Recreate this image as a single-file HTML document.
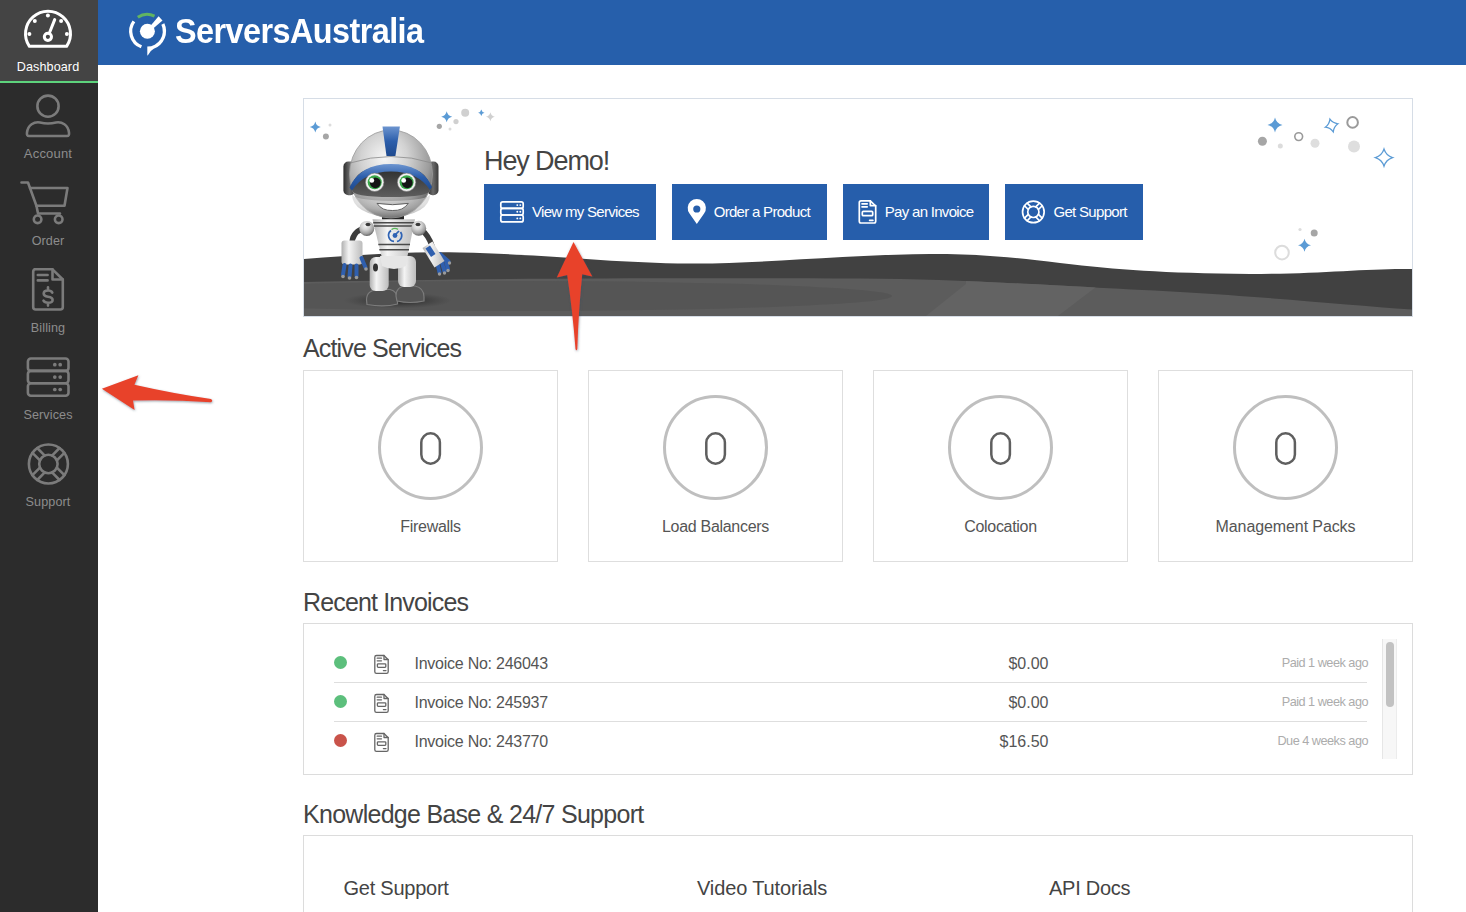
<!DOCTYPE html>
<html><head><meta charset="utf-8">
<style>
*{margin:0;padding:0;box-sizing:border-box}
html,body{width:1466px;height:912px;overflow:hidden;background:#fff;font-family:"Liberation Sans",sans-serif}
.abs{position:absolute}
.t{position:absolute;line-height:1;white-space:nowrap}
#sb{position:absolute;left:0;top:0;width:98px;height:912px;background:#2c2c2c}
#sbact{position:absolute;left:0;top:0;width:98px;height:81px;background:#444}
#sbline{position:absolute;left:0;top:81px;width:98px;height:2px;background:#5dd37c}
.sbl{position:absolute;left:-1px;width:98px;text-align:center;font-size:12.6px;line-height:1;color:#8c8c8c;letter-spacing:0.1px}
#hdr{position:absolute;left:98px;top:0;width:1368px;height:65px;background:#265fab}
.box{position:absolute;border:1px solid #dcdcdc;background:#fff}
.h2{position:absolute;font-size:25px;line-height:1;color:#444;letter-spacing:-0.85px;white-space:nowrap}
.btn{position:absolute;top:184px;height:56px;background:#265eab}
.btxt{position:absolute;font-size:15px;line-height:1;color:#fff;white-space:nowrap;letter-spacing:-0.7px}
.card{position:absolute;top:370px;width:255px;height:192px;border:1px solid #dedede}
.ring{position:absolute;left:74px;top:24px;width:105px;height:105px;border:3px solid #bfbfbf;border-radius:50%}
.num{position:absolute;left:0;width:253px;text-align:center;top:58px;font-size:45px;line-height:1;color:#555}
.clab{position:absolute;left:0;width:253px;text-align:center;top:148px;font-size:16px;line-height:1;color:#555;letter-spacing:-0.3px}
.inv{position:absolute;font-size:16px;line-height:1;color:#555;white-space:nowrap;letter-spacing:-0.25px}
.amt{position:absolute;font-size:16px;line-height:1;color:#555;white-space:nowrap;text-align:right;width:120px}
.st{position:absolute;font-size:12.7px;line-height:1;color:#acacac;white-space:nowrap;text-align:right;width:120px;letter-spacing:-0.5px}
.dot{position:absolute;width:13px;height:13px;border-radius:50%}
.sep{position:absolute;left:334px;width:1033px;height:1px;background:#dedede}
.kb{position:absolute;font-size:20px;line-height:1;color:#444;white-space:nowrap;letter-spacing:-0.25px}
</style></head><body>

<!-- SIDEBAR -->
<div id="sb">
  <div id="sbact"></div>
  <div id="sbline"></div>
  <div class="sbl" style="top:60.6px;color:#fff">Dashboard</div>
  <div class="sbl" style="top:147.2px;font-size:13px;letter-spacing:0.2px">Account</div>
  <div class="sbl" style="top:234.5px">Order</div>
  <div class="sbl" style="top:321.8px">Billing</div>
  <div class="sbl" style="top:409.1px">Services</div>
  <div class="sbl" style="top:496.4px">Support</div>
  <svg class="abs" style="left:0;top:0" width="98" height="520" viewBox="0 0 98 520">
    <g fill="none" stroke="#fff" stroke-width="3" stroke-linecap="round" stroke-linejoin="round">
      <path d="M29.4 46.3 A22.5 22.5 0 1 1 66.6 46.3 Z"/>
      <circle cx="47.9" cy="36.8" r="3.6"/>
      <path d="M49.8 32 L54.7 19.6"/>
    </g>
    <g fill="#fff">
      <circle cx="47.9" cy="15.4" r="2"/><circle cx="34.8" cy="20.9" r="2"/><circle cx="61.1" cy="20.9" r="2"/>
      <circle cx="29.4" cy="34" r="2"/><circle cx="66.9" cy="34" r="2"/>
    </g>
    <g fill="none" stroke="#7b7b7b" stroke-width="2.6" stroke-linecap="round" stroke-linejoin="round">
      <circle cx="48" cy="106.2" r="10.6"/>
      <path d="M29 136 L67 136 Q69.5 136 69 132.5 C68 125 62 121.5 56 122.5 Q48 124.5 40 122.5 C34 121.5 28 125 27 132.5 Q26.5 136 29 136 Z"/>
      <path d="M21.5 182.5 L28 182.5 L36.5 206 L38 213.5 L60 213.5"/>
      <path d="M30 188 L67.5 188 L64.5 205.8 L36.3 205.8"/>
      <circle cx="37.6" cy="219.3" r="3.8"/>
      <circle cx="58.7" cy="219.3" r="3.8"/>
      <path d="M34.5 269.3 L52.5 269.3 L62.8 279.5 L62.8 307 Q62.8 309.5 60.3 309.5 L35.7 309.5 Q33.2 309.5 33.2 307 L33.2 271.8 Q33.2 269.3 35.7 269.3 Z"/>
      <path d="M52.5 269.3 L52.5 279.5 L62.8 279.5"/>
      <path d="M37.8 275 L47.6 275 M37.8 280.4 L47.6 280.4"/>
      <path d="M52.3 292.6 Q51.3 290.5 48 290.5 Q43.7 290.5 43.7 293.6 Q43.7 296.2 48 296.7 Q52.6 297.2 52.6 299.9 Q52.6 302.7 48 302.7 Q44.6 302.7 43.5 300.6 M48 287.3 L48 290.5 M48 302.7 L48 305.6"/>
      <rect x="27.9" y="358.5" width="40.6" height="12.4" rx="3"/>
      <rect x="27.9" y="370.9" width="40.6" height="12.4" rx="3"/>
      <rect x="27.9" y="383.3" width="40.6" height="12.4" rx="3"/>
      <circle cx="48.4" cy="464" r="19.5"/>
      <circle cx="48.4" cy="464" r="9.2"/>
      <path d="M56.85 467.64 L64.38 475.17 M52.04 472.45 L59.57 479.98 M44.76 472.45 L37.23 479.98 M39.95 467.64 L32.42 475.17 M39.95 460.36 L32.42 452.83 M44.76 455.55 L37.23 448.02 M52.04 455.55 L59.57 448.02 M56.85 460.36 L64.38 452.83"/>
    </g>
    <g fill="#7b7b7b">
      <circle cx="54.8" cy="364.7" r="1.85"/><circle cx="60.2" cy="364.7" r="1.85"/>
      <circle cx="54.8" cy="377.1" r="1.85"/><circle cx="60.2" cy="377.1" r="1.85"/>
      <circle cx="54.8" cy="389.5" r="1.85"/><circle cx="60.2" cy="389.5" r="1.85"/>
    </g>
  </svg>
</div>

<!-- HEADER -->
<div id="hdr"></div>
<svg class="abs" style="left:120px;top:5px" width="60" height="56" viewBox="120 5 60 56">
  <g fill="none" stroke-width="3.3">
    <path d="M133.9 21.4 A16.7 16.7 0 0 0 141.4 46.8" stroke="#fff"/>
    <path d="M137.8 17.3 A16.7 16.7 0 0 1 154.5 16.1" stroke="#62b462" stroke-width="3"/>
  </g>
  <path d="M164.35 23.3 A18.7 18.7 0 0 1 153.8 48.77 Q149.8 50.8 147.9 55.3 Q147.3 55.8 147.3 55 L147.3 46.6 A15.4 15.4 0 0 0 161.36 24.69 Z" fill="#fff"/>
  <circle cx="147.4" cy="31.2" r="7.5" fill="#fff"/>
  <path d="M149.5 27 L158.6 16.2 L162.5 20.6 L152 29.5 Z" fill="#fff"/>
</svg>
<div class="t" style="left:175px;top:13px;font-size:35px;font-weight:bold;color:#fff;letter-spacing:-0.6px;transform:scaleX(0.925);transform-origin:0 0">ServersAustralia</div>

<!-- BANNER -->
<div class="box" style="left:303px;top:98px;width:1110px;height:219px;border-color:#d6dde6"></div>
<svg class="abs" style="left:304px;top:99px" width="1108" height="217" viewBox="304 99 1108 217">
  <path d="M304 259 C360 255 410 251 460 252.5 C560 255 610 263 690 263.5 C760 264 840 255 930 254 C980 254 1010 257 1060 263 C1120 270 1160 273 1250 274 C1320 274 1370 268 1412 269 L1412 316 L304 316 Z" fill="#414141"/>
  <clipPath id="bandclip"><path d="M304 282 C450 279 600 277.5 860 278.5 C960 279 1020 284 1180 292 C1280 298 1350 305 1412 309.5 L1412 316 L304 316 Z"/></clipPath>
  <g clip-path="url(#bandclip)">
    <rect x="304" y="270" width="1108" height="46" fill="#5c5c5c"/>
    <ellipse cx="520" cy="296" rx="372" ry="15" fill="#555"/>
    <path d="M966 270 L1100 270 L1100 284 L1058 316 L926 316 L966 284 Z" fill="#636363"/>
  </g>
  <path d="M1275 117.5 Q1276.35 123.65 1282.5 125 Q1276.35 126.35 1275 132.5 Q1273.65 126.35 1267.5 125 Q1273.65 123.65 1275 117.5 Z" fill="#5b9bd5"/>
  <circle cx="1262.4" cy="141.3" r="4.5" fill="#a6a6a6"/>
  <circle cx="1280.3" cy="146" r="2.5" fill="#dcdcdc"/>
  <circle cx="1298.7" cy="136.6" r="3.9" fill="none" stroke="#9a9a9a" stroke-width="1.6"/>
  <circle cx="1315" cy="143.2" r="4.5" fill="#dedede"/>
  <path d="M1331.6 119.0 Q1333.4199999999998 123.68 1338.1 125.5 Q1333.4199999999998 127.32 1331.6 132.0 Q1329.78 127.32 1325.1 125.5 Q1329.78 123.68 1331.6 119.0 Z" fill="none" stroke="#5b9bd5" stroke-width="1.3" transform="rotate(-15 1331.6 125.5)"/>
  <circle cx="1352.6" cy="122.4" r="5.3" fill="none" stroke="#9a9a9a" stroke-width="2"/>
  <circle cx="1354" cy="146.6" r="6" fill="#dedede"/>
  <path d="M1384 149.1 Q1386.125 155.475 1392.5 157.6 Q1386.125 159.725 1384 166.1 Q1381.875 159.725 1375.5 157.6 Q1381.875 155.475 1384 149.1 Z" fill="none" stroke="#5b9bd5" stroke-width="1.4"/>
  <circle cx="1300" cy="229.5" r="1.6" fill="#dcdcdc"/>
  <circle cx="1314.2" cy="232.9" r="3.5" fill="#a6a6a6"/>
  <path d="M1304.5 238.8 Q1305.67 244.13000000000002 1311.0 245.3 Q1305.67 246.47 1304.5 251.8 Q1303.33 246.47 1298.0 245.3 Q1303.33 244.13000000000002 1304.5 238.8 Z" fill="#5b9bd5"/>
  <circle cx="1282" cy="252.6" r="6.8" fill="none" stroke="#dcdcdc" stroke-width="2"/>
  <path d="M315.3 121.5 Q316.29 126.01 320.8 127 Q316.29 127.99 315.3 132.5 Q314.31 127.99 309.8 127 Q314.31 126.01 315.3 121.5 Z" fill="#5b9bd5"/>
  <circle cx="325.9" cy="136.4" r="3" fill="#a6a6a6"/>
  <circle cx="330" cy="125" r="1.5" fill="#dcdcdc"/>
  <path d="M446.7 111.2 Q447.69 115.71000000000001 452.2 116.7 Q447.69 117.69 446.7 122.2 Q445.71 117.69 441.2 116.7 Q445.71 115.71000000000001 446.7 111.2 Z" fill="#5b9bd5"/>
  <circle cx="465.2" cy="112.8" r="4" fill="#d0d0d0"/>
  <circle cx="456" cy="121.6" r="2.6" fill="#d0d0d0"/>
  <circle cx="439.3" cy="126.3" r="2.6" fill="#a6a6a6"/>
  <circle cx="450" cy="129" r="1.5" fill="#dcdcdc"/>
  <path d="M481.3 109.6 Q481.87600000000003 112.224 484.5 112.8 Q481.87600000000003 113.37599999999999 481.3 116.0 Q480.724 113.37599999999999 478.1 112.8 Q480.724 112.224 481.3 109.6 Z" fill="#5b9bd5"/>
  <path d="M490.4 112.2 Q491.21 115.89 494.9 116.7 Q491.21 117.51 490.4 121.2 Q489.59 117.51 485.9 116.7 Q489.59 115.89 490.4 112.2 Z" fill="#d0d0d0"/>
</svg>
<svg class="abs" style="left:330px;top:118px" width="130" height="195" viewBox="330 118 130 195">
  <defs>
    <radialGradient id="silv" cx="0.42" cy="0.32" r="0.7">
      <stop offset="0" stop-color="#f6f6f6"/><stop offset="0.4" stop-color="#d2d2d2"/><stop offset="0.78" stop-color="#9c9c9c"/><stop offset="1" stop-color="#606060"/>
    </radialGradient>
    <radialGradient id="silv2" cx="0.5" cy="0.2" r="0.8">
      <stop offset="0" stop-color="#f4f4f4"/><stop offset="0.6" stop-color="#c8c8c8"/><stop offset="1" stop-color="#808080"/>
    </radialGradient>
    <linearGradient id="wht" x1="0" x2="1" y1="0" y2="0">
      <stop offset="0" stop-color="#b0b0b0"/><stop offset="0.35" stop-color="#f4f4f4"/><stop offset="1" stop-color="#bcbcbc"/>
    </linearGradient>
    <linearGradient id="ear" x1="0" x2="1" y1="0" y2="0">
      <stop offset="0" stop-color="#2c2c2c"/><stop offset="0.5" stop-color="#6a6a6a"/><stop offset="1" stop-color="#3a3a3a"/>
    </linearGradient>
    <radialGradient id="shd" cx="0.5" cy="0.5" r="0.5">
      <stop offset="0" stop-color="#1e1e1e" stop-opacity="0.95"/><stop offset="1" stop-color="#333" stop-opacity="0"/>
    </radialGradient>
    <linearGradient id="face" x1="0" x2="0" y1="0" y2="1">
      <stop offset="0" stop-color="#2a2a2a"/><stop offset="1" stop-color="#5e5e5e"/>
    </linearGradient>
    <linearGradient id="band" x1="0" x2="0" y1="0" y2="1">
      <stop offset="0" stop-color="#6d95d0"/><stop offset="0.5" stop-color="#2c5eab"/><stop offset="1" stop-color="#1f4a8e"/>
    </linearGradient>
  </defs>
  <ellipse cx="398" cy="300.5" rx="54" ry="8" fill="url(#shd)"/>
  <!-- shoes -->
  <path d="M366.5 300 Q366.5 289.5 380 289.5 L390 289.5 Q397.5 291 397.5 300 L397.5 304 Q384 307.5 367 304.5 Z" fill="#505050" stroke="#7c7c7c" stroke-width="1.2"/>
  <path d="M396 296 Q396 286 407 286 L415 286 Q424 288 424 297 L424 301 Q410 304 397 301 Z" fill="#555" stroke="#7c7c7c" stroke-width="1.2"/>
  <!-- legs -->
  <rect x="369.7" y="257" width="19" height="34" rx="6" fill="url(#wht)"/>
  <rect x="398" y="256" width="18" height="31" rx="6" fill="url(#wht)"/>
  <ellipse cx="375.5" cy="267.5" rx="2.5" ry="4" fill="#333"/>
  <path d="M380 256 L408 256 L406 266 Q394 272 382 266 Z" fill="#e6e6e6"/>
  <!-- arms -->
  <path d="M362 229 Q352 233 352 244" fill="none" stroke="#3d3d3d" stroke-width="5.5" stroke-linecap="round"/>
  <path d="M421 229 Q429 236 432 246" fill="none" stroke="#3d3d3d" stroke-width="5.5" stroke-linecap="round"/>
  <rect x="341.5" y="240.5" width="21" height="24" rx="3" fill="url(#wht)"/>
  <g stroke="#2f5fae" stroke-width="4" stroke-linecap="round">
    <path d="M344.5 265 L343 274.5 M350.5 265.5 L349.5 276.5 M356.5 265.5 L356.5 276 M361.5 258 L365.5 267.5"/>
    <path d="M437 262 L439.5 272.5 M441.5 261 L444.5 271.5 M445.5 259 L448 269 M440 254 L448.5 261.5"/>
  </g>
  <g fill="#9a9a9a">
    <circle cx="343" cy="276.5" r="1.8"/><circle cx="349.5" cy="278" r="1.8"/><circle cx="356.5" cy="277.5" r="1.8"/><circle cx="366" cy="269" r="1.8"/>
    <circle cx="439.5" cy="274" r="1.7"/><circle cx="444.5" cy="273" r="1.7"/><circle cx="448" cy="270.5" r="1.7"/><circle cx="449.5" cy="263" r="1.7"/>
  </g>
  <path d="M422.5 248 L432.5 241.5 L444.5 261 L434.5 267.5 Z" fill="url(#wht)"/>
  <path d="M425.5 248.5 L430 245.5 L435.5 254 L431 257 Z" fill="#2f5fae"/>
  <!-- torso -->
  <rect x="382" y="214" width="22" height="7" rx="2" fill="#262626"/>
  <path d="M372.5 219.2 L415 219.2 L407.5 256 L381.5 256 Z" fill="url(#wht)"/>
  <g stroke="#4a4a4a" stroke-width="1.4">
    <path d="M373.2 222.7 L414.3 222.7 M373.8 226 L413.7 226 M378.3 244.5 L410 244.5 M379.3 249.7 L409 249.7"/>
  </g>
  <circle cx="366.8" cy="228.4" r="7.5" fill="url(#silv)"/>
  <circle cx="418.7" cy="228.2" r="7.5" fill="url(#silv)"/>
  <ellipse cx="368" cy="224.5" rx="2.5" ry="1.7" fill="#3a3a3a"/>
  <ellipse cx="418" cy="224.5" rx="2.5" ry="1.7" fill="#3a3a3a"/>
  <g fill="none" stroke="#2f63b4" stroke-width="1.7">
    <path d="M391 230.5 A6 6 0 0 0 394 241.3"/><path d="M400.5 232 A6 6 0 0 1 397 241.5"/>
  </g>
  <path d="M391.5 229.6 A6 6 0 0 1 398 229.4" fill="none" stroke="#5cb85c" stroke-width="1.3"/>
  <circle cx="395" cy="235.5" r="2.4" fill="#2f63b4"/>
  <path d="M395.5 234.5 L399 231" stroke="#2f63b4" stroke-width="1.7"/>
  <!-- head -->
  <rect x="343.4" y="161.6" width="12" height="33.6" rx="5" fill="url(#ear)"/>
  <rect x="427.5" y="161.6" width="11" height="33.6" rx="5" fill="url(#ear)"/>
  <ellipse cx="391" cy="174" rx="41.5" ry="44" fill="url(#silv)" stroke="#9a9a9a" stroke-width="0.8"/>
  <path d="M350 163 Q391 150 432 163" fill="none" stroke="#8a8a8a" stroke-width="0.8"/>
  <path d="M352 194 Q352 214 391 217.5 Q430 214 430 194 Q430 200 391 201 Q352 200 352 194 Z" fill="url(#silv2)" opacity="0.55"/>
  <path d="M382.5 126.4 L399.9 126.4 L395.4 156 L386.5 156 Z" fill="url(#band)"/>
  <path d="M352 190 Q352 166 391 166 Q430 166 430 190 Q430 197 391 197 Q352 197 352 190 Z" fill="url(#face)"/>
  <path d="M349.5 187.5 Q360 164 391 164 Q422 164 432 187 L430 190 Q418 171.5 391 171.5 Q364 171.5 352 190.5 Z" fill="url(#band)"/>
  <circle cx="374.7" cy="182.3" r="9.2" fill="#f2f2f2" stroke="#777" stroke-width="0.6"/>
  <circle cx="406.6" cy="182.3" r="9.2" fill="#f2f2f2" stroke="#777" stroke-width="0.6"/>
  <circle cx="374.7" cy="182.3" r="7" fill="#3aa84a"/>
  <circle cx="406.6" cy="182.3" r="7" fill="#3aa84a"/>
  <circle cx="375.3" cy="182.8" r="5.4" fill="#151515"/>
  <circle cx="407.2" cy="182.8" r="5.4" fill="#151515"/>
  <circle cx="371.8" cy="180.4" r="2.4" fill="#fff"/>
  <circle cx="403.7" cy="180.4" r="2.4" fill="#fff"/>
  <path d="M377 203.4 Q392.5 206 408.3 203.4 Q403 211 392.5 210.5 Q382 211 377 203.4 Z" fill="#fff" stroke="#555" stroke-width="0.9"/>
</svg>
<div class="t" style="left:484px;top:148px;font-size:27px;color:#444;letter-spacing:-1.1px">Hey Demo!</div>
<div class="btn" style="left:484px;width:172px"></div>
<div class="btn" style="left:672px;width:155px"></div>
<div class="btn" style="left:843px;width:146px"></div>
<div class="btn" style="left:1005px;width:138px"></div>
<svg class="abs" style="left:484px;top:184px" width="660" height="56" viewBox="484 184 660 56">
  <g fill="none" stroke="#fff" stroke-width="1.7" stroke-linejoin="round" stroke-linecap="round">
    <rect x="500.8" y="201.8" width="22.4" height="6.6" rx="2"/>
    <rect x="500.8" y="208.4" width="22.4" height="6.6" rx="2"/>
    <rect x="500.8" y="215" width="22.4" height="6.9" rx="2"/>
    <path d="M859.3 202.5 Q859.3 200.8 861 200.8 L870.3 200.8 L875.7 206 L875.7 221.3 Q875.7 223 874 223 L861 223 Q859.3 223 859.3 221.3 Z"/>
    <path d="M870.3 200.8 L870.3 205.6 L875.7 205.6"/>
    <path d="M862 203.8 L867.2 203.8 M862 206.8 L867.2 206.8 M869.6 220.3 L872.9 220.3"/>
    <rect x="862.3" y="211.4" width="10.4" height="4.3" rx="1"/>
    <circle cx="1033.35" cy="211.9" r="10.8"/>
    <circle cx="1033.35" cy="211.9" r="5.6"/>
    <path d="M1038.42 214.28 L1042.21 218.07 M1035.73 216.97 L1039.52 220.76 M1030.97 216.97 L1027.18 220.76 M1028.28 214.28 L1024.49 218.07 M1028.28 209.52 L1024.49 205.73 M1030.97 206.83 L1027.18 203.04 M1035.73 206.83 L1039.52 203.04 M1038.42 209.52 L1042.21 205.73"/>
  </g>
  <g fill="#fff">
    <circle cx="517.3" cy="205.1" r="0.95"/><circle cx="520.3" cy="205.1" r="0.95"/>
    <circle cx="517.3" cy="211.7" r="0.95"/><circle cx="520.3" cy="211.7" r="0.95"/>
    <circle cx="517.3" cy="218.4" r="0.95"/><circle cx="520.3" cy="218.4" r="0.95"/>
    <path fill-rule="evenodd" d="M696.8 224 L689.5 213.5 A9.1 9.1 0 1 1 704.1 213.5 Z M696.8 205.4 A3.6 3.6 0 1 0 696.8 212.6 A3.6 3.6 0 1 0 696.8 205.4 Z"/>
  </g>
</svg>
<div class="btxt" style="left:532px;top:204.2px">View my Services</div>
<div class="btxt" style="left:713.7px;top:204.2px">Order a Product</div>
<div class="btxt" style="left:884.8px;top:204.2px">Pay an Invoice</div>
<div class="btxt" style="left:1053.5px;top:204.2px">Get Support</div>

<!-- ACTIVE SERVICES -->
<div class="h2" style="left:303px;top:335.7px">Active Services</div>
<div class="card" style="left:303px"><div class="ring"></div><svg class="abs" style="left:116px;top:61px" width="24" height="36" viewBox="0 0 24 36"><rect x="1.3" y="1.3" width="18.6" height="30.4" rx="9.3" fill="none" stroke="#5f5f5f" stroke-width="2.5"/></svg><div class="clab">Firewalls</div></div>
<div class="card" style="left:588px"><div class="ring"></div><svg class="abs" style="left:116px;top:61px" width="24" height="36" viewBox="0 0 24 36"><rect x="1.3" y="1.3" width="18.6" height="30.4" rx="9.3" fill="none" stroke="#5f5f5f" stroke-width="2.5"/></svg><div class="clab">Load Balancers</div></div>
<div class="card" style="left:873px"><div class="ring"></div><svg class="abs" style="left:116px;top:61px" width="24" height="36" viewBox="0 0 24 36"><rect x="1.3" y="1.3" width="18.6" height="30.4" rx="9.3" fill="none" stroke="#5f5f5f" stroke-width="2.5"/></svg><div class="clab">Colocation</div></div>
<div class="card" style="left:1158px"><div class="ring"></div><svg class="abs" style="left:116px;top:61px" width="24" height="36" viewBox="0 0 24 36"><rect x="1.3" y="1.3" width="18.6" height="30.4" rx="9.3" fill="none" stroke="#5f5f5f" stroke-width="2.5"/></svg><div class="clab" style="letter-spacing:-0.1px">Management Packs</div></div>

<!-- RECENT INVOICES -->
<div class="h2" style="left:303px;top:589.8px">Recent Invoices</div>
<div class="box" style="left:303px;top:623px;width:1110px;height:152px"></div>
<div class="dot" style="left:334px;top:656px;background:#5cbf7c"></div>
<div class="inv" style="left:414.5px;top:655.5px">Invoice No: 246043</div>
<div class="amt" style="left:928.5px;top:655.8px">$0.00</div>
<div class="st" style="left:1248px;top:656.6px">Paid 1 week ago</div>
<div class="dot" style="left:334px;top:695px;background:#5cbf7c"></div>
<div class="inv" style="left:414.5px;top:694.5px">Invoice No: 245937</div>
<div class="amt" style="left:928.5px;top:694.8px">$0.00</div>
<div class="st" style="left:1248px;top:695.6px">Paid 1 week ago</div>
<div class="dot" style="left:334px;top:734px;background:#c9534a"></div>
<div class="inv" style="left:414.5px;top:733.5px">Invoice No: 243770</div>
<div class="amt" style="left:928.5px;top:733.8px">$16.50</div>
<div class="st" style="left:1248px;top:734.6px">Due 4 weeks ago</div>
<div class="sep" style="top:682px"></div>
<div class="sep" style="top:721px"></div>
<svg class="abs" style="left:370px;top:650px" width="24" height="110" viewBox="370 650 24 110"><g fill="none" stroke="#666" stroke-width="1.3" stroke-linejoin="round" stroke-linecap="round"><g transform="translate(0 0)">
    <path d="M374.8 657.2 Q374.8 655.5 376.5 655.5 L384 655.5 L388.2 659.8 L388.2 671.7 Q388.2 673.4 386.5 673.4 L376.5 673.4 Q374.8 673.4 374.8 671.7 Z"/>
    <path d="M384 655.5 L384 659.5 L388.2 659.5"/>
    <path d="M377.2 658.2 L381.5 658.2 M377.2 660.8 L381.5 660.8 M383.4 670.6 L386 670.6"/>
    <rect x="377.4" y="663.8" width="8.4" height="3.6" rx="0.8"/>
  </g><g transform="translate(0 39)">
    <path d="M374.8 657.2 Q374.8 655.5 376.5 655.5 L384 655.5 L388.2 659.8 L388.2 671.7 Q388.2 673.4 386.5 673.4 L376.5 673.4 Q374.8 673.4 374.8 671.7 Z"/>
    <path d="M384 655.5 L384 659.5 L388.2 659.5"/>
    <path d="M377.2 658.2 L381.5 658.2 M377.2 660.8 L381.5 660.8 M383.4 670.6 L386 670.6"/>
    <rect x="377.4" y="663.8" width="8.4" height="3.6" rx="0.8"/>
  </g><g transform="translate(0 78)">
    <path d="M374.8 657.2 Q374.8 655.5 376.5 655.5 L384 655.5 L388.2 659.8 L388.2 671.7 Q388.2 673.4 386.5 673.4 L376.5 673.4 Q374.8 673.4 374.8 671.7 Z"/>
    <path d="M384 655.5 L384 659.5 L388.2 659.5"/>
    <path d="M377.2 658.2 L381.5 658.2 M377.2 660.8 L381.5 660.8 M383.4 670.6 L386 670.6"/>
    <rect x="377.4" y="663.8" width="8.4" height="3.6" rx="0.8"/>
  </g></g></svg>
<div class="abs" style="left:1382px;top:639px;width:15px;height:120px;background:#f7f7f7;border-left:1px solid #e6e6e6;border-right:1px solid #ececec"></div>
<div class="abs" style="left:1386px;top:642px;width:8px;height:65px;background:#c2c2c2;border-radius:4px"></div>

<!-- KB -->
<div class="h2" style="left:303px;top:801.8px;letter-spacing:-0.72px">Knowledge Base &amp; 24/7 Support</div>
<div class="box" style="left:303px;top:835px;width:1110px;height:100px"></div>
<div class="kb" style="left:343.5px;top:878px">Get Support</div>
<div class="kb" style="left:697px;top:878px;letter-spacing:-0.12px">Video Tutorials</div>
<div class="kb" style="left:1049px;top:878px">API Docs</div>

<svg class="abs" style="left:0;top:0" width="1466" height="912" viewBox="0 0 1466 912">
  <defs><filter id="sh" x="-20%" y="-20%" width="140%" height="140%"><feDropShadow dx="0.5" dy="1" stdDeviation="0.8" flood-color="#3a5060" flood-opacity="0.55"/></filter></defs>
  <g fill="#e8422a" filter="url(#sh)">
    <path d="M573.5 242 L592.3 276.6 L582.2 274.2 Q578.5 310 577.3 349 Q576.4 351.5 575.5 349 Q572.5 310 567.2 275 L556.8 277.6 Z"/>
    <path d="M101.9 388.7 L138.4 375.2 L134.4 384.8 Q175 394 211 399 Q213.5 401 211 402.2 Q170 399.5 133 400.6 L134.6 409.9 Z"/>
  </g>
</svg>
</body></html>
